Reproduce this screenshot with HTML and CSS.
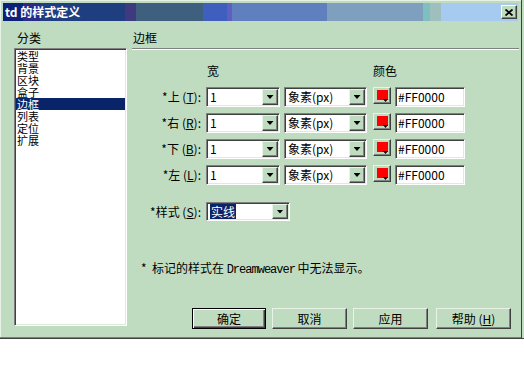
FILE: index.html
```html
<!DOCTYPE html>
<html lang="zh-CN">
<head>
  <meta charset="UTF-8">
  <title>td 的样式定义</title>
  <link rel="stylesheet" href="styles.css">
</head>
<body>
  <div class="dialog">
    <div class="titlebar">
      <span class="title">td 的样式定义</span>
      <span class="close">
        <svg width="8" height="7" viewBox="0 0 8 7"><path d="M0.5 0.5 L7.5 6.5 M7.5 0.5 L0.5 6.5" stroke="#000" stroke-width="1.8" fill="none"/></svg>
      </span>
    </div>

    <div class="main">
      <div class="cats">
        <div class="cap">分类</div>
        <ul class="catlist">
          <li>类型</li>
          <li>背景</li>
          <li>区块</li>
          <li>盒子</li>
          <li class="sel">边框</li>
          <li>列表</li>
          <li>定位</li>
          <li>扩展</li>
        </ul>
      </div>

      <div class="pane">
        <div class="pane-head">边框</div>

        <div class="grid">
          <div></div>
          <div class="colhead w">宽</div>
          <div></div>
          <div class="colhead c">颜色</div>

          <div class="lbl">*上 (<u>T</u>):</div>
          <div class="combo width"><span class="val">1</span><span class="dd"></span></div>
          <div class="combo unit"><span class="val">象素(px)</span><span class="dd"></span></div>
          <div class="colorbtn"><span class="swatch"></span></div>
          <div class="hex">#FF0000</div>

          <div class="lbl">*右 (<u>R</u>):</div>
          <div class="combo width"><span class="val">1</span><span class="dd"></span></div>
          <div class="combo unit"><span class="val">象素(px)</span><span class="dd"></span></div>
          <div class="colorbtn"><span class="swatch"></span></div>
          <div class="hex">#FF0000</div>

          <div class="lbl">*下 (<u>B</u>):</div>
          <div class="combo width"><span class="val">1</span><span class="dd"></span></div>
          <div class="combo unit"><span class="val">象素(px)</span><span class="dd"></span></div>
          <div class="colorbtn"><span class="swatch"></span></div>
          <div class="hex">#FF0000</div>

          <div class="lbl">*左 (<u>L</u>):</div>
          <div class="combo width"><span class="val">1</span><span class="dd"></span></div>
          <div class="combo unit"><span class="val">象素(px)</span><span class="dd"></span></div>
          <div class="colorbtn"><span class="swatch"></span></div>
          <div class="hex">#FF0000</div>
        </div>

        <div class="style-row">
          <div class="lbl">*样式 (<u>S</u>):</div>
          <div class="combo style"><span class="val"><span class="hl">实线</span></span><span class="dd"></span></div>
        </div>

        <p class="note">*&nbsp; 标记的样式在 <span class="mono">Dreamweaver</span> 中无法显示。</p>

        <div class="buttons">
          <button class="btn default">确定</button>
          <button class="btn">取消</button>
          <button class="btn">应用</button>
          <button class="btn help">帮助 (<u>H</u>)</button>
        </div>
      </div>
    </div>
  </div>
</body>
</html>
```

FILE: styles.css
```css
* {
  box-sizing: border-box;
}
html, body {
  margin: 0;
  padding: 0;
  background: #fff;
}
body {
  font-family: "Noto Sans CJK SC", "Liberation Sans", sans-serif;
  font-size: 12px;
  color: #000;
}
u {
  text-decoration: underline;
  text-underline-offset: 1px;
}

/* window frame */
.dialog {
  width: 524px;
  height: 339px;
  padding: 3px 0 0 3px;
  background: #c0dcc0;
  border-bottom: 1px solid #404040;
  box-shadow: inset -2px 0 0 #c0dcc0, inset -3px 0 0 #404040, inset 0 -1px 0 #808080, inset 1px 1px 0 #e6f2e6;
}
.titlebar {
  width: 515px;
  height: 18px;
  display: flex;
  align-items: center;
  justify-content: space-between;
  padding: 0 1px 0 2px;
  background: linear-gradient(to right,
    #0c2278 0 20px, #2a2a8a 20px 37px, #1f3e7f 37px 122px, #3f3a7f 122px 133px,
    #3f5f7f 133px 200px, #3f5fbf 200px 224px, #5f5fbf 224px 229px, #5f7fbf 229px 324px,
    #7f9fbf 324px 420px, #7fbfbf 420px 427px, #9fbfbf 427px 438px, #a6caf0 438px);
}
.title {
  color: #fff;
  font-weight: bold;
  line-height: 18px;
}
.close {
  width: 16px;
  height: 14px;
  display: flex;
  align-items: center;
  justify-content: center;
  background: #c0dcc0;
  border: 1px solid;
  border-color: #fff #404040 #404040 #fff;
  box-shadow: inset -1px -1px 0 #808080;
}

/* 3d borders */
.catlist, .combo, .hex {
  border: 1px solid;
  border-color: #808080 #fff #fff #808080;
  box-shadow: inset 1px 1px 0 #404040, inset -1px -1px 0 #dcebdc;
  background: #fff;
}
.dd, .colorbtn, .btn {
  background: #c0dcc0;
  border: 1px solid;
  border-color: #e8f4e8 #404040 #404040 #e8f4e8;
  box-shadow: inset -1px -1px 0 #808080;
}

.main {
  display: flex;
  padding: 10px 5px 0 11px;
}

/* category list */
.cats {
  width: 113px;
}
.cap {
  height: 17px;
  line-height: 14px;
  padding-left: 3px;
}
.catlist {
  height: 278px;
  margin: 0;
  padding: 1px;
  list-style: none;
}
.catlist li {
  font-size: 11px;
  line-height: 12px;
  height: 12px;
  padding-left: 1px;
}
.catlist li.sel {
  background: #0a246a;
  color: #fff;
}

/* right pane */
.pane {
  flex: 1;
  margin-left: 5px;
}
.pane-head {
  height: 18px;
  line-height: 14px;
  padding-left: 1px;
  border-bottom: 1px solid #808080;
  box-shadow: 0 1px 0 #fff;
}
.grid {
  display: grid;
  grid-template-columns: 74px 78px 89px 22px 70px;
  grid-template-rows: 17px repeat(4, 20px);
  row-gap: 6px;
  margin-top: 15px;
}
.colhead {
  line-height: 14px;
}
.colhead.w {
  padding-left: 1px;
}
.colhead.c {
  grid-column: span 2;
}
.lbl {
  text-align: right;
  padding-right: 5px;
  line-height: 20px;
  white-space: nowrap;
}

.combo {
  height: 20px;
  display: flex;
  padding: 1px;
}
.combo.width {
  width: 74px;
}
.combo.unit {
  width: 83px;
}
.combo.style {
  width: 84px;
  height: 19px;
}
.combo .val {
  flex: 1;
  line-height: 16px;
  padding-left: 2px;
  white-space: nowrap;
  overflow: hidden;
}
.combo .dd {
  width: 16px;
  height: 16px;
  display: flex;
  align-items: center;
  justify-content: center;
}
.combo.style .dd {
  height: 15px;
}
.dd::after {
  content: "";
  width: 7px;
  height: 4px;
  background: #000;
  clip-path: polygon(0 0, 100% 0, 50% 100%);
}
.hl {
  background: #0a246a;
  color: #fff;
  padding: 0 1px;
}

.colorbtn {
  position: relative;
  width: 18px;
  height: 17px;
  padding: 2px 0 0 3px;
}
.swatch {
  display: block;
  width: 11px;
  height: 10px;
  background: #ff0000;
}
.colorbtn::after {
  content: "";
  position: absolute;
  right: 2px;
  bottom: 1px;
  width: 5px;
  height: 3px;
  background: #000;
  clip-path: polygon(0 0, 100% 0, 50% 100%);
}
.hex {
  width: 70px;
  height: 20px;
  padding-left: 2px;
  line-height: 17px;
}

.style-row {
  display: flex;
  margin-top: 17px;
}
.style-row .lbl {
  width: 74px;
  line-height: 19px;
}

.note {
  margin: 40px 0 0;
  padding-left: 9px;
  line-height: 14px;
}
.mono {
  font-family: "Liberation Mono", monospace;
  letter-spacing: -1px;
}

.buttons {
  display: flex;
  gap: 6px;
  margin-top: 31px;
  padding-left: 60px;
}
.btn {
  width: 75px;
  height: 21px;
  padding: 0;
  font: inherit;
  line-height: 18px;
  text-align: center;
  color: #000;
}
.btn.default {
  width: 74px;
  border: 1px solid #000;
  box-shadow: inset 1px 1px 0 #fff, inset -1px -1px 0 #404040, inset -2px -2px 0 #808080;
}
.btn.help {
  margin-left: 2px;
}
```
